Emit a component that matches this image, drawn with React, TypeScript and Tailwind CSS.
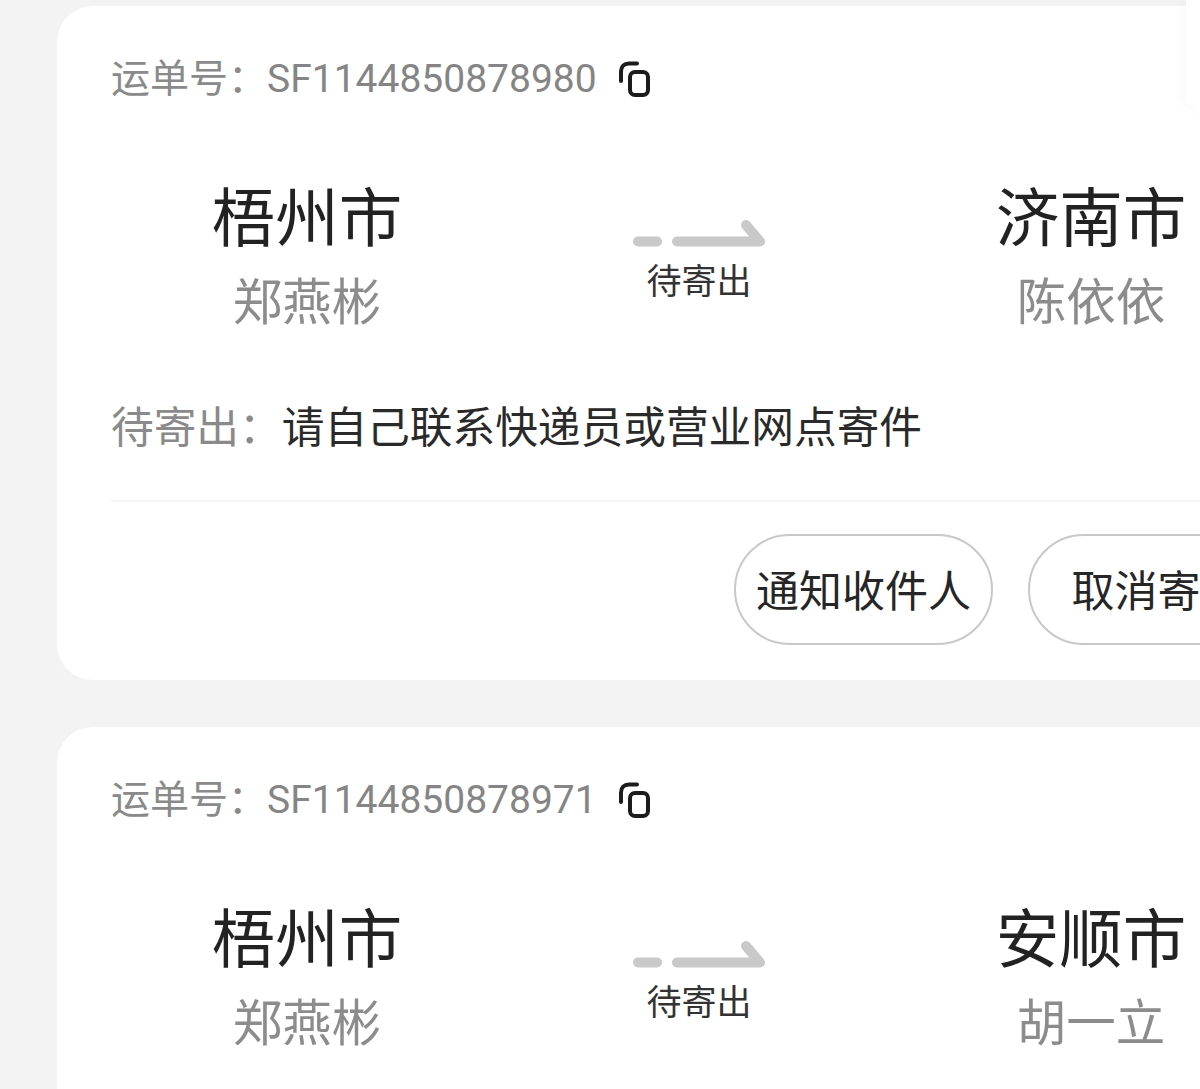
import React from 'react';

const cjk = 'font-["Roboto","Noto_Sans_CJK_SC",sans-serif]';

type Waybill = {
    no: string;
    from: string;
    sender: string;
    to: string;
    receiver: string;
};

const waybills: Waybill[] = [
    { no: 'SF1144850878980', from: '梧州市', sender: '郑燕彬', to: '济南市', receiver: '陈依依' },
    { no: 'SF1144850878971', from: '梧州市', sender: '郑燕彬', to: '安顺市', receiver: '胡一立' },
];

const CopyIcon = () => (
    <svg width="32" height="36" viewBox="0 0 32 36" fill="none" stroke="#1c1c1c" strokeWidth="4" strokeLinecap="round" className="block">
        <path d="M2 20V10.5C2 5.5 5 2.5 10 2.5H18" />
        <rect x="11" y="11" width="18" height="23" rx="5" />
    </svg>
);

const StatusArrow = () => (
    <svg width="134" height="30" viewBox="0 0 134 30" fill="none" stroke="#c9c9c9" strokeWidth="10" strokeLinecap="round" strokeLinejoin="round" className="block">
        <path d="M6 23.5H25" />
        <path d="M45 23.5H128L114 7" />
    </svg>
);

const City = ({ city, name }: { city: string; name: string }) => (
    <div className="flex flex-col items-center">
        <div className="text-[63.5px] leading-[72px] text-[#222222] whitespace-nowrap">{city}</div>
        <div className="mt-[19px] text-[49.5px] leading-[56px] text-[#8c8c8c] whitespace-nowrap">{name}</div>
    </div>
);

const WaybillCard = ({ item }: { item: Waybill }) => (
    <div className="w-[1284px] h-[674px] shrink-0 bg-white rounded-[36px] px-[54px] pt-[53px]">
        <div className="flex items-center h-[40px] text-[39px] leading-[40px] text-[#8a8a8a]">
            <span>运单号：</span>
            <span className="text-[#858585]">{item.no}</span>
            <span className="ml-[22px]"><CopyIcon /></span>
        </div>
        <div className="grid grid-cols-3 mt-[85px]">
            <City city={item.from} name={item.sender} />
            <div className="flex flex-col items-center pt-[34px]">
                <StatusArrow />
                <div className="mt-[15px] text-[35px] leading-[40px] text-[#333333]">待寄出</div>
            </div>
            <City city={item.to} name={item.receiver} />
        </div>
        <div className="mt-[72px] text-[42.7px] leading-[50px] whitespace-nowrap">
            <span className="text-[#8a8a8a]">待寄出：</span>
            <span className="text-[#2a2a2a]">请自己联系快递员或营业网点寄件</span>
        </div>
        <div className="mt-[47px] h-[2px] bg-[#f5f5f5]" />
        <div className="flex mt-[32px] ml-[623px] gap-[35px]">
            <button className="w-[261px] h-[111px] pt-[6px] rounded-full border-2 border-[#c8c8c8] text-[43px] text-[#262626] whitespace-nowrap">通知收件人</button>
            <button className="w-[261px] h-[111px] pt-[6px] rounded-full border-2 border-[#c8c8c8] text-[43px] text-[#262626] whitespace-nowrap">取消寄件</button>
        </div>
    </div>
);

const App = () => {
    return (
        <div className={`relative w-[1200px] h-[1089px] overflow-hidden bg-[#f3f3f3] ${cjk}`}>
            <div className="flex flex-col gap-[47px] pt-[6px] pl-[57px]">
                {waybills.map((item) => (
                    <WaybillCard key={item.no} item={item} />
                ))}
            </div>
            <div className="absolute top-0 right-0 w-[14px] h-[108px] bg-white rounded-bl-[12px] shadow-[0_0_16px_rgba(0,0,0,0.05)]" />
        </div>
    );
};

export default App;
